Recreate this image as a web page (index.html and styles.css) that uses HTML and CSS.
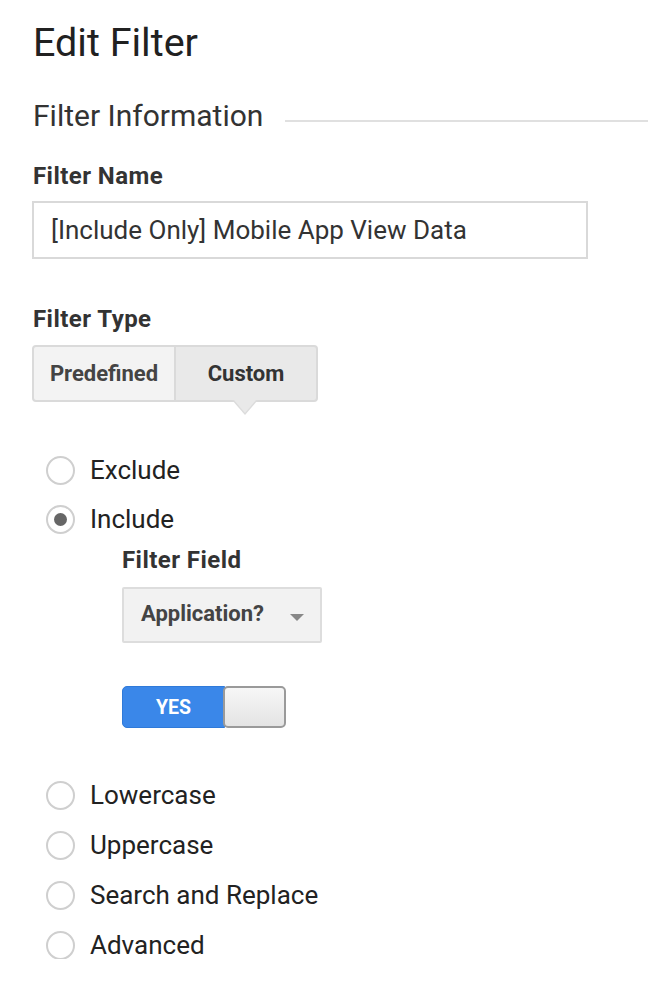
FILE: index.html
```html
<!DOCTYPE html>
<html>
<head>
<meta charset="utf-8">
<link rel="stylesheet" href="styles.css">
</head>
<body>
<div class="page">
  <h1 class="title">Edit Filter</h1>
  <div class="section-head">
    <span class="section-title">Filter Information</span>
    <span class="section-line"></span>
  </div>
  <div class="label">Filter Name</div>
  <div class="input">[Include Only] Mobile App View Data</div>
  <div class="label label-type">Filter Type</div>
  <div class="seg">
    <div class="seg-btn">Predefined</div>
    <div class="seg-btn seg-active">Custom</div>
  </div>
  <div class="radios radios-top">
    <div class="radio-row"><span class="radio"></span><span class="radio-label">Exclude</span></div>
    <div class="radio-row"><span class="radio radio-on"></span><span class="radio-label">Include</span></div>
  </div>
  <div class="sub">
    <div class="label sub-label">Filter Field</div>
    <div class="select"><span>Application?</span><span class="caret"></span></div>
    <div class="toggle"><span class="toggle-on">YES</span><span class="toggle-knob"></span></div>
  </div>
  <div class="radios radios-bottom">
    <div class="radio-row"><span class="radio"></span><span class="radio-label">Lowercase</span></div>
    <div class="radio-row"><span class="radio"></span><span class="radio-label">Uppercase</span></div>
    <div class="radio-row"><span class="radio"></span><span class="radio-label">Search and Replace</span></div>
    <div class="radio-row"><span class="radio"></span><span class="radio-label">Advanced</span></div>
  </div>
</div>
</body>
</html>
```
FILE: styles.css
```css
* { box-sizing: border-box; }
html, body { margin: 0; padding: 0; background: #fff; }
body { font-family: Roboto, "Liberation Sans", Arial, sans-serif; color: #222; }
.page { padding: 20px 0 0 32px; width: 648px; }
.title { margin: 0; font-size: 39.5px; font-weight: 400; line-height: 46px; color: #212121; padding-left: 1px; }
.section-head { display: flex; align-items: center; margin-top: 30px; height: 40px; }
.section-title { font-size: 30px; color: #333; line-height: 40px; padding-left: 1px; }
.section-line { flex: 1; height: 2px; background: #e0e0e0; margin-left: 22px; margin-top: 10px; }
.label { font-size: 24px; letter-spacing: 0.45px; font-weight: 700; color: #333; line-height: 28px; padding-left: 1px; }
.section-head + .label { margin-top: 26px; }
.input { margin-top: 11px; width: 556px; height: 58px; border: 2px solid #d9d9d9; font-size: 26px; color: #333; line-height: 54px; padding-left: 17px; }
.label-type { margin-top: 46px; }
.seg { display: flex; margin-top: 12px; position: relative; width: 286px; }
.seg-btn { height: 57px; width: 143px; border: 2px solid #dadada; background: #f3f3f3; font-size: 22px; font-weight: 700; color: #444; display: flex; align-items: center; justify-content: center; }
.seg-btn:first-child { border-radius: 4px 0 0 4px; border-right: 1px solid #dadada; }
.seg-active { background: #e9e9e9; border-left: 1px solid #dadada; border-radius: 0 4px 4px 0; color: #333; }
.seg-active::after { content: ""; position: absolute; left: 200px; top: 55px; border-left: 13px solid transparent; border-right: 13px solid transparent; border-top: 15px solid #dcdcdc; }
.seg-active::before { content: ""; position: absolute; left: 202px; top: 55px; border-left: 11px solid transparent; border-right: 11px solid transparent; border-top: 13px solid #e9e9e9; z-index: 1; }
.radios { display: flex; flex-direction: column; padding-left: 14px; }
.radios-top { margin-top: 54px; gap: 21px; }
.radios-bottom { margin-top: 53px; gap: 22px; }
.radio-row { display: flex; align-items: center; height: 28px; }
.radio { width: 29px; height: 29px; border-radius: 50%; border: 2px solid #cfcfcf; background: #fff; display: flex; align-items: center; justify-content: center; flex: none; }
.radio-on::after { content: ""; width: 13px; height: 13px; border-radius: 50%; background: #666; }
.radio-label { font-size: 26px; margin-left: 15px; color: #222; }
.sub { padding-left: 90px; margin-top: 13px; }
.sub-label { padding-left: 0; }
.select { margin-top: 13px; width: 200px; height: 56px; border: 2px solid #dddddd; background: #f2f2f2; border-radius: 2px; display: flex; align-items: center; justify-content: space-between; padding: 0 16px 4px 17px; font-size: 22px; font-weight: 700; color: #444; }
.caret { width: 0; height: 0; border-left: 7px solid transparent; border-right: 7px solid transparent; border-top: 7px solid #888; margin-top: 8px; }
.toggle { margin-top: 43px; display: flex; width: 164px; height: 42px; }
.toggle-on { width: 103px; background: #3a87e9; color: #fff; font-weight: 700; font-size: 19.5px; display: flex; align-items: center; justify-content: center; border-radius: 5px 0 0 5px; border: 1px solid #2f7ad9; }
.toggle-knob { flex: 1; background: linear-gradient(#f7f7f7, #e4e4e4); border: 2px solid #9a9a9a; border-radius: 5px; margin-left: -2px; }
```
